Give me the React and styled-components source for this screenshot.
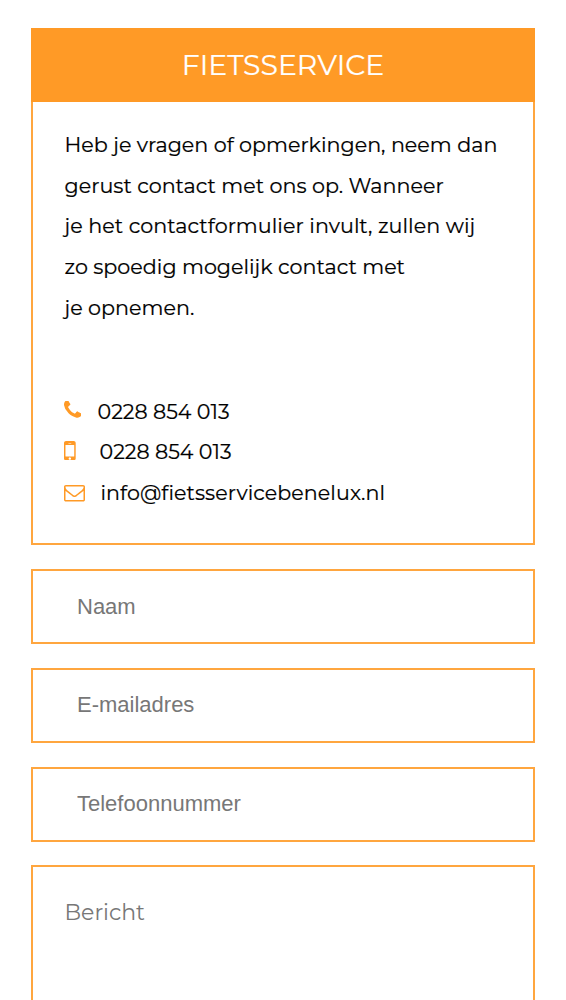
import React from 'react';
import styled, { createGlobalStyle } from 'styled-components';

const orange = '#ff9a26';
const edge = '#ffa63f';
const Global = createGlobalStyle`
  *{box-sizing:border-box}
  body{margin:0;background:#fff;overflow:hidden}
`;
const Page = styled.main`
  height:1000px;overflow:hidden;padding:28px 31px 0;
  display:flex;flex-direction:column;gap:23.8px;
  font-family:Montserrat,Inter,sans-serif;
`;
const Card = styled.section`
  flex:none;height:517.4px;border:2px solid ${edge};
`;
const Heading = styled.h1`
  margin:-2px -2px 0;height:74px;background:${orange};color:#fff;
  display:flex;align-items:center;justify-content:center;
  font-size:28.3px;font-weight:400;-webkit-text-stroke:.2px currentColor;
`;
const Body = styled.div`padding:22.9px 31.5px 0;`;
const Line = styled.div`
  height:40.8px;line-height:40.8px;font-size:20.68px;color:#000;white-space:nowrap;
  letter-spacing:${p => p.$track || 0}px;
  -webkit-text-stroke:.2px currentColor;
`;
const Contacts = styled.div`margin-top:62px;`;
const Contact = styled.div`
  display:flex;align-items:center;height:40.8px;color:${orange};
`;
const Icon = styled.span`
  width:${p => p.$w}px;display:flex;margin:${p => p.$shift || 0}px 0 0 -.7px;
  svg{display:block;fill:currentColor}
`;
const Label = styled.span`
  font-size:20.6px;line-height:26px;color:#000;margin-top:.6px;
  font-variant-ligatures:none;letter-spacing:${p => p.$track || 0}px;
  -webkit-text-stroke:.2px currentColor;
`;
const Input = styled.input`
  flex:none;height:75px;width:100%;border:2px solid ${edge};border-radius:0;padding:0 44px;
  font:22px "Liberation Sans",Arial,sans-serif;background:#fff;
  &::placeholder{color:#777;opacity:1}
`;
const Area = styled.textarea`
  flex:none;height:180px;width:100%;border:2px solid ${edge};border-radius:0;padding:31px 31.5px;resize:none;
  margin-top:-.9px;
  font:22px/30px Montserrat,Inter,sans-serif;
  &::placeholder{color:#777;opacity:1}
`;
const Phone = () => <svg width="17.5" height="17.5" viewBox="192 192 1408 1408"><path d="M1600 1240q0 27-10 70.5t-21 68.5q-21 50-122 106-94 51-186 51-27 0-53-3.5t-57-12.5-47-14.5-55.5-20.5-49.5-18q-98-35-175-83-127-79-264-216t-216-264q-48-77-83-175-3-9-18-49.5t-20.5-55.5-14.5-47-12.5-57-3.5-53q0-92 51-186 56-101 106-122 25-11 68.5-21t70.5-10q14 0 21 3 18 6 53 76 11 19 30 54t35 63.5 31 53.5q3 4 17.5 25t21.5 35.5 7 28.5q0 20-28.5 50t-62 55-62 53-28.5 46q0 9 5 22.5t8.5 20.5 14 24 11.5 19q76 137 174 235t235 174q2 1 19 11.5t24 14 20.5 8.5 22.5 5q18 0 46-28.5t53-62 55-62 50-28.5q14 0 28.5 7t35.5 21.5 25 17.5q25 15 53.5 31t63.5 35 54 30q70 35 76 53 3 7 3 21z"/></svg>;
const Mobile = () => <svg width="11.7" height="19.5" viewBox="512 256 768 1280"><path d="M976 1408q0-33-23.5-56.5t-56.5-23.5-56.5 23.5-23.5 56.5 23.5 56.5 56.5 23.5 56.5-23.5 23.5-56.5zm208-160v-704q0-13-9.5-22.5t-22.5-9.5h-512q-13 0-22.5 9.5t-9.5 22.5v704q0 13 9.5 22.5t22.5 9.5h512q13 0 22.5-9.5t9.5-22.5zm-192-848q0-16-16-16h-160q-16 0-16 16t16 16h160q16 0 16-16zm288-16v1024q0 52-38 90t-90 38h-512q-52 0-90-38t-38-90v-1024q0-52 38-90t90-38h512q52 0 90 38t38 90z"/></svg>;
const Envelope = () => <svg width="21" height="16.5" viewBox="0 256 1792 1408"><path d="M1664 1504v-768q-32 36-69 66-268 206-426 338-51 43-83 67t-86.5 48.5-102.5 24.5h-2q-48 0-102.5-24.5t-86.5-48.5-83-67q-158-132-426-338-37-30-69-66v768q0 13 9.5 22.5t22.5 9.5h1472q13 0 22.5-9.5t9.5-22.5zm0-1051v-24.5l-.5-13-3-12.5-5.5-9-9-7.5-14-2.5h-1472q-13 0-22.5 9.5t-9.5 22.5q0 168 147 284 193 152 401 317 6 5 35 29.5t46 37.5 44.5 31.5 50.5 27.5 43 9h2q20 0 43-9t50.5-27.5 44.5-31.5 46-37.5 35-29.5q208-165 401-317 54-43 100.5-115.5t46.5-131.5zm128-37v1088q0 66-47 113t-113 47h-1472q-66 0-113-47t-47-113v-1088q0-66 47-113t113-47h1472q66 0 113 47t47 113z"/></svg>;

export default function App() {
  return <><Global/><Page>
    <Card>
      <Heading>FIETSSERVICE</Heading>
      <Body>
        <Line>Heb je vragen of opmerkingen, neem dan</Line>
        <Line>gerust contact met ons op. Wanneer</Line>
        <Line $track={0.05}>je het contactformulier invult, zullen wij</Line>
        <Line>zo spoedig mogelijk contact met</Line>
        <Line>je opnemen.</Line>
        <Contacts>
          <Contact><Icon $w={33.7} $shift={-3}><Phone/></Icon><Label>0228 854 013</Label></Contact>
          <Contact><Icon $w={35.7} $shift={-3}><Mobile/></Icon><Label>0228 854 013</Label></Contact>
          <Contact><Icon $w={36.7} $shift={1}><Envelope/></Icon><Label $track={0.08}>info@fietsservicebenelux.nl</Label></Contact>
        </Contacts>
      </Body>
    </Card>
    <Input placeholder="Naam"/><Input placeholder="E-mailadres"/><Input placeholder="Telefoonnummer"/>
    <Area placeholder="Bericht"/>
  </Page></>;
}
